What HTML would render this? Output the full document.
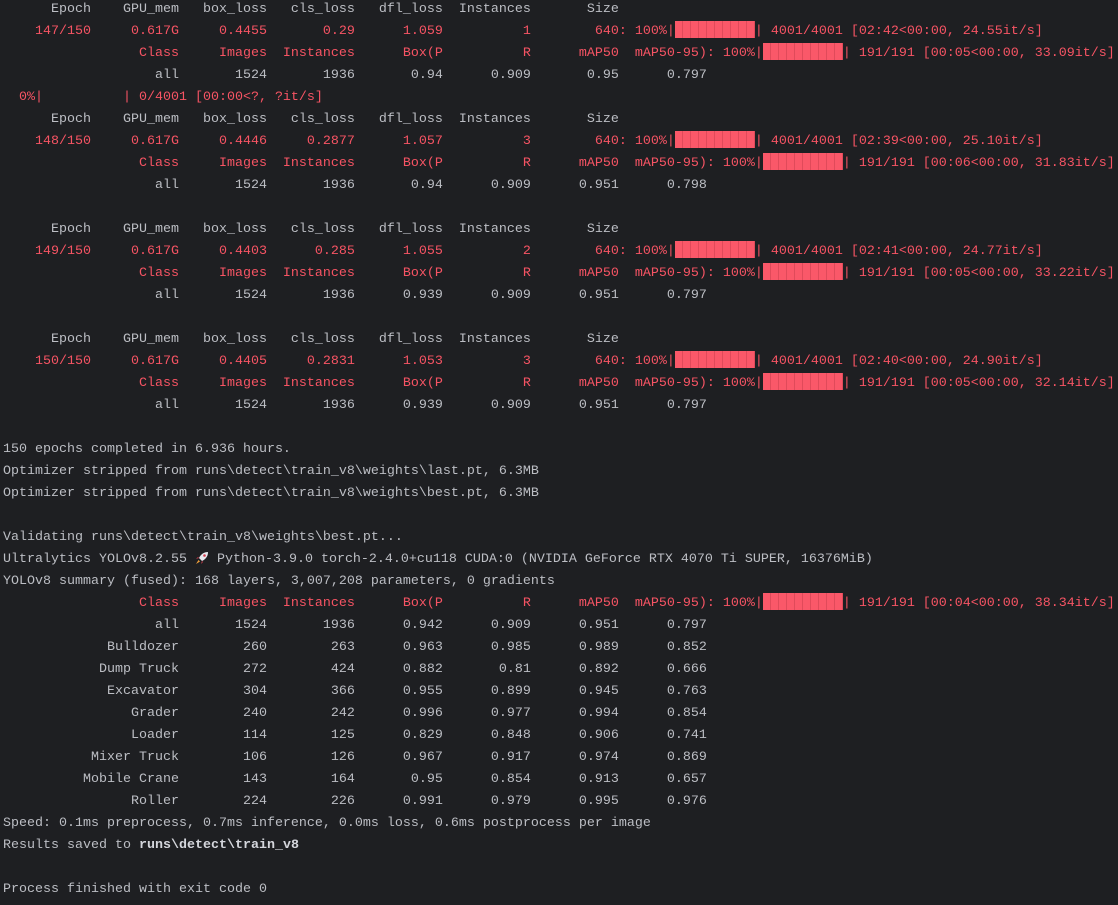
<!DOCTYPE html>
<html><head><meta charset="utf-8"><style>
html,body{margin:0;padding:0;background:#1e1f22;width:1118px;height:905px;overflow:hidden}
pre{margin:0;padding:0 0 0 3px;position:relative;top:-1px;font-family:"Liberation Mono","DejaVu Sans Mono",monospace;font-size:13.33px;line-height:22px;color:#bcbec4;white-space:pre}
.r{color:#f75464}
.b{display:inline-block;width:80px;height:17px;background:#fa5869;vertical-align:-4px;background-image:repeating-linear-gradient(90deg,#fa5869 0,#fa5869 7px,#e04a5a 7px,#e04a5a 8px)}
b{color:#d4d6dc}
svg{vertical-align:-3px}
</style></head><body><pre>      Epoch    GPU_mem   box_loss   cls_loss   dfl_loss  Instances       Size
<span class="r">    147/150     0.617G     0.4455       0.29      1.059          1        640: 100%|<span class="b"></span>| 4001/4001 [02:42&lt;00:00, 24.55it/s]</span>
<span class="r">                 Class     Images  Instances      Box(P          R      mAP50  mAP50-95): 100%|<span class="b"></span>| 191/191 [00:05&lt;00:00, 33.09it/s]</span>
                   all       1524       1936       0.94      0.909       0.95      0.797
<span class="r">  0%|          | 0/4001 [00:00&lt;?, ?it/s]</span>
      Epoch    GPU_mem   box_loss   cls_loss   dfl_loss  Instances       Size
<span class="r">    148/150     0.617G     0.4446     0.2877      1.057          3        640: 100%|<span class="b"></span>| 4001/4001 [02:39&lt;00:00, 25.10it/s]</span>
<span class="r">                 Class     Images  Instances      Box(P          R      mAP50  mAP50-95): 100%|<span class="b"></span>| 191/191 [00:06&lt;00:00, 31.83it/s]</span>
                   all       1524       1936       0.94      0.909      0.951      0.798

      Epoch    GPU_mem   box_loss   cls_loss   dfl_loss  Instances       Size
<span class="r">    149/150     0.617G     0.4403      0.285      1.055          2        640: 100%|<span class="b"></span>| 4001/4001 [02:41&lt;00:00, 24.77it/s]</span>
<span class="r">                 Class     Images  Instances      Box(P          R      mAP50  mAP50-95): 100%|<span class="b"></span>| 191/191 [00:05&lt;00:00, 33.22it/s]</span>
                   all       1524       1936      0.939      0.909      0.951      0.797

      Epoch    GPU_mem   box_loss   cls_loss   dfl_loss  Instances       Size
<span class="r">    150/150     0.617G     0.4405     0.2831      1.053          3        640: 100%|<span class="b"></span>| 4001/4001 [02:40&lt;00:00, 24.90it/s]</span>
<span class="r">                 Class     Images  Instances      Box(P          R      mAP50  mAP50-95): 100%|<span class="b"></span>| 191/191 [00:05&lt;00:00, 32.14it/s]</span>
                   all       1524       1936      0.939      0.909      0.951      0.797

150 epochs completed in 6.936 hours.
Optimizer stripped from runs\detect\train_v8\weights\last.pt, 6.3MB
Optimizer stripped from runs\detect\train_v8\weights\best.pt, 6.3MB

Validating runs\detect\train_v8\weights\best.pt...
Ultralytics YOLOv8.2.55 <svg width="14" height="14" viewBox="0 0 14 14"><path d="M13 1 C9 1 6 3 4 7 L7 10 C11 8 13 5 13 1Z" fill="#e8e8ee"/><circle cx="9.5" cy="4.5" r="1.3" fill="#d23c4c"/><path d="M4 7 L1 8 L3 6 Z M7 10 L6 13 L8 11Z" fill="#d23c4c"/><path d="M3.5 9 L1 13 L5 10.5Z" fill="#f2a03a"/></svg> Python-3.9.0 torch-2.4.0+cu118 CUDA:0 (NVIDIA GeForce RTX 4070 Ti SUPER, 16376MiB)
YOLOv8 summary (fused): 168 layers, 3,007,208 parameters, 0 gradients
<span class="r">                 Class     Images  Instances      Box(P          R      mAP50  mAP50-95): 100%|<span class="b"></span>| 191/191 [00:04&lt;00:00, 38.34it/s]</span>
                   all       1524       1936      0.942      0.909      0.951      0.797
             Bulldozer        260        263      0.963      0.985      0.989      0.852
            Dump Truck        272        424      0.882       0.81      0.892      0.666
             Excavator        304        366      0.955      0.899      0.945      0.763
                Grader        240        242      0.996      0.977      0.994      0.854
                Loader        114        125      0.829      0.848      0.906      0.741
           Mixer Truck        106        126      0.967      0.917      0.974      0.869
          Mobile Crane        143        164       0.95      0.854      0.913      0.657
                Roller        224        226      0.991      0.979      0.995      0.976
Speed: 0.1ms preprocess, 0.7ms inference, 0.0ms loss, 0.6ms postprocess per image
Results saved to <b>runs\detect\train_v8</b>

Process finished with exit code 0
</pre></body></html>
